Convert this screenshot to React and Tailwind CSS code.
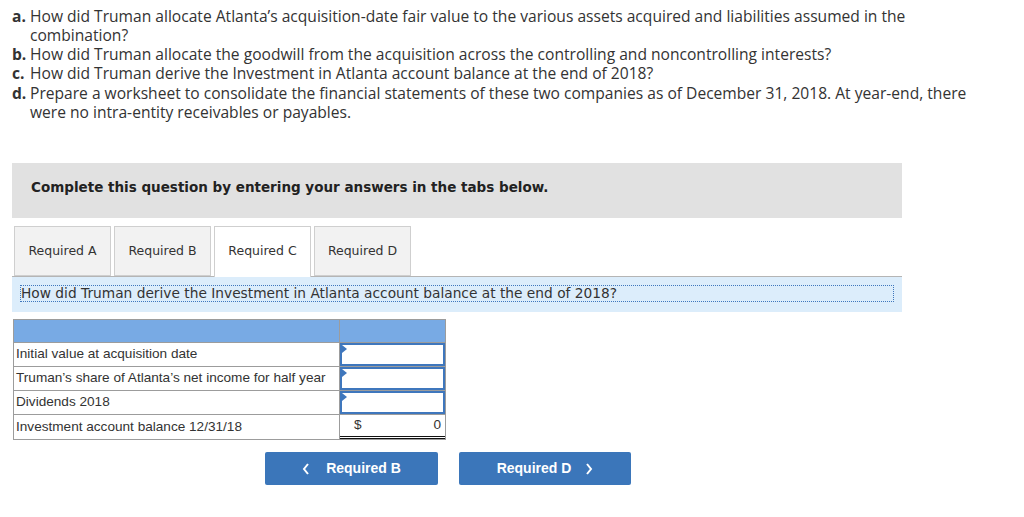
import React from "react";

const questions = [
  {
    label: "a.",
    text: "How did Truman allocate Atlanta’s acquisition-date fair value to the various assets acquired and liabilities assumed in the combination?",
  },
  {
    label: "b.",
    text: "How did Truman allocate the goodwill from the acquisition across the controlling and noncontrolling interests?",
  },
  {
    label: "c.",
    text: "How did Truman derive the Investment in Atlanta account balance at the end of 2018?",
  },
  {
    label: "d.",
    text: "Prepare a worksheet to consolidate the financial statements of these two companies as of December 31, 2018. At year-end, there were no intra-entity receivables or payables.",
  },
];

const tabs = ["Required A", "Required B", "Required C", "Required D"];

const rows = [
  { label: "Initial value at acquisition date", input: true },
  { label: "Truman’s share of Atlanta’s net income for half year", input: true },
  { label: "Dividends 2018", input: true },
  { label: "Investment account balance 12/31/18", input: false },
];

const InputCell = () => (
  <div className="relative h-full border-2 border-[#3f77bd] bg-white">
    <span className="absolute left-0 top-0 w-0 h-0 border-t-[4px] border-b-[4px] border-l-[5px] border-t-transparent border-b-transparent border-l-[#3f77bd]" />
  </div>
);

const App = () => {
  return (
    <div className="w-[1024px] h-[517px] bg-white overflow-hidden">
      <div className="pl-3 pt-[7px] text-[15.6px] leading-[19px] text-[#333] font-['Open_Sans',Arial,sans-serif]">
        {questions.map((q) => (
          <div key={q.label} className={q.label === "d." ? "flex mt-px" : "flex"}>
            <span className="w-[18px] shrink-0 font-bold">{q.label}</span>
            <span className="w-[945px]">{q.text}</span>
          </div>
        ))}
      </div>

      <div className="mt-[41px] ml-3 w-[890px] h-[55px] bg-[#e1e1e1] flex items-center pl-[19px] pb-[6px]">
        <span className="font-['DejaVu_Sans',Verdana,sans-serif] font-bold text-[13.5px] text-[#222]">
          Complete this question by entering your answers in the tabs below.
        </span>
      </div>

      <div className="ml-[14px] mt-2 flex gap-[3px] h-[50px]">
        {tabs.map((t) => (
          <div
            key={t}
            className={
              t === "Required C"
                ? "w-[97px] h-[51px] pb-px border border-[#cfcfcf] border-b-0 bg-white flex items-center justify-center text-[12.5px] text-[#333] font-['DejaVu_Sans',Verdana,sans-serif] z-10"
                : "w-[97px] border border-[#cfcfcf] bg-[#f2f2f2] flex items-center justify-center text-[12.5px] text-[#333] font-['DejaVu_Sans',Verdana,sans-serif]"
            }
          >
            {t}
          </div>
        ))}
      </div>

      <div className="ml-3 w-[890px] h-[36px] bg-[#dcedfb] border-t border-[#b5b5b5] pt-2 px-2">
        <div className="h-[17px] border border-dotted border-[#3f77bd] flex items-center font-['DejaVu_Sans',Verdana,sans-serif] text-[13.75px] text-[#333] leading-none">
          How did Truman derive the Investment in Atlanta account balance at the end of 2018?
        </div>
      </div>

      <div className="ml-[13px] mt-[7px] w-[433px] font-['Liberation_Sans',Arial,sans-serif] text-[13.6px] text-[#333]">
        <div className="flex h-[24px] bg-[#78aae4] border border-[#9c9c9c]">
          <div className="w-[326px] border-r border-[#9c9c9c]" />
          <div className="flex-1" />
        </div>
        {rows.map((r, i) => (
          <div
            key={r.label}
            className={
              i === rows.length - 1
                ? "flex h-[25px] border-x border-b border-[#9c9c9c]"
                : "flex h-[24px] border-x border-b border-[#9c9c9c]"
            }
          >
            <div className="w-[326px] border-r border-[#9c9c9c] flex items-center pl-[2px]">
              {r.label}
            </div>
            <div className="flex-1">
              {r.input ? (
                <InputCell />
              ) : (
                <div className="h-full flex items-center justify-between pl-[14px] pr-[4px] border-b-[3px] border-double border-[#111]">
                  <span>$</span>
                  <span>0</span>
                </div>
              )}
            </div>
          </div>
        ))}
      </div>

      <div className="ml-[265px] mt-[12px] flex gap-[21px] font-['Liberation_Sans',Arial,sans-serif] font-bold text-[14px] text-white">
        <div className="w-[173px] h-[33px] bg-[#3b76ba] rounded-[2px] flex items-center justify-center gap-[16px]">
          <svg width="8" height="12" viewBox="0 0 8 12" fill="none" stroke="white" strokeWidth="2">
            <path d="M6 1 L2 6 L6 11" />
          </svg>
          <span>Required B</span>
        </div>
        <div className="w-[172px] h-[33px] bg-[#3b76ba] rounded-[2px] flex items-center justify-center gap-[14px]">
          <span>Required D</span>
          <svg width="8" height="12" viewBox="0 0 8 12" fill="none" stroke="white" strokeWidth="2">
            <path d="M2 1 L6 6 L2 11" />
          </svg>
        </div>
      </div>
    </div>
  );
};

export default App;
